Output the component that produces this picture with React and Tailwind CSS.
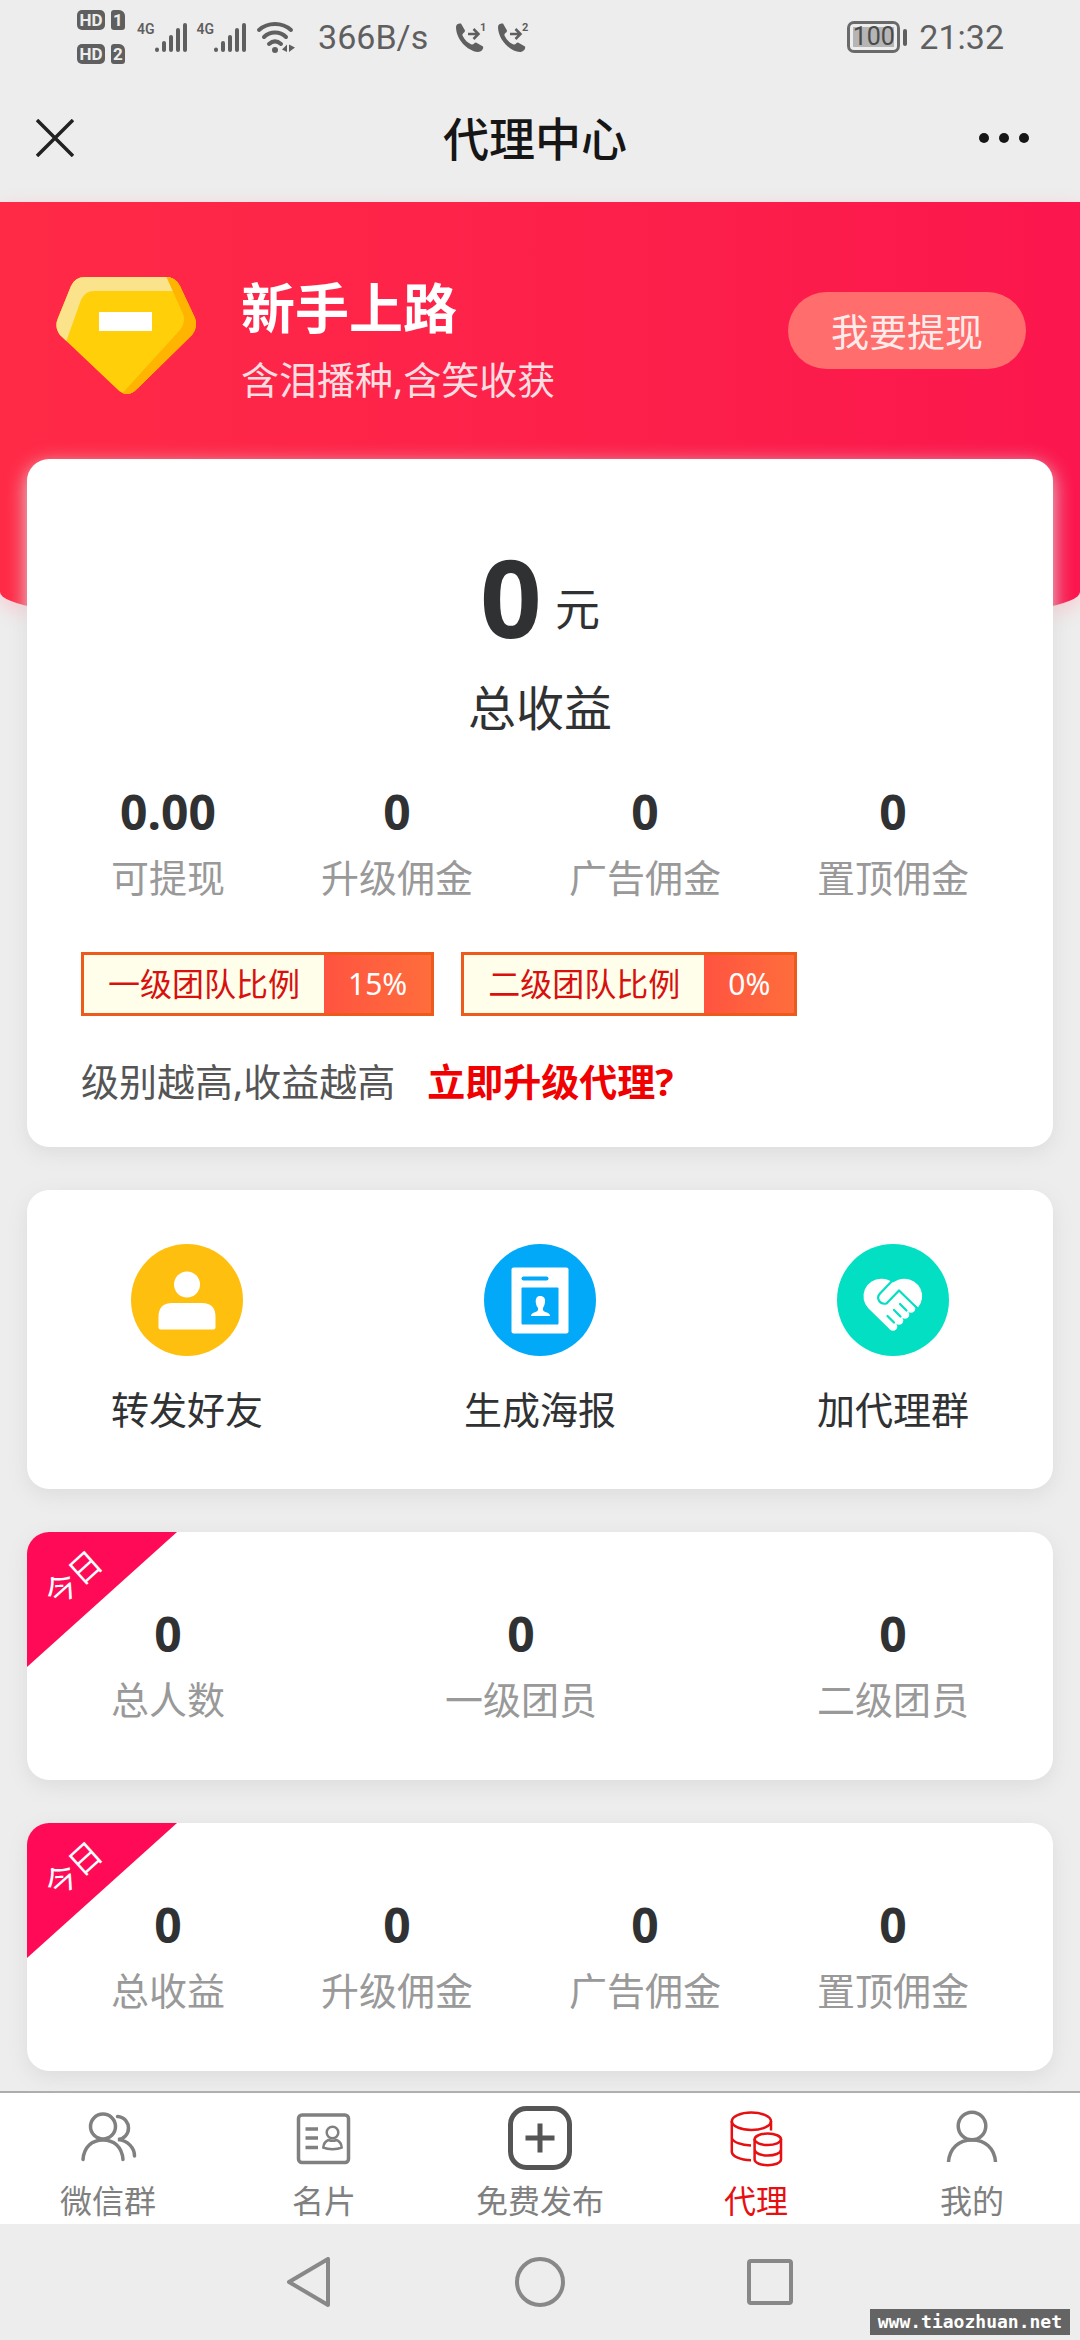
import React from 'react';

const resumo = [
  { label: '可提现', value: '0.00' },
  { label: '升级佣金', value: '0' },
  { label: '广告佣金', value: '0' },
  { label: '置顶佣金', value: '0' }
];

const equipe = [
  { label: '总人数', value: '0' },
  { label: '一级团员', value: '0' },
  { label: '二级团员', value: '0' }
];

const ganhosHoje = [
  { label: '总收益', value: '0' },
  { label: '升级佣金', value: '0' },
  { label: '广告佣金', value: '0' },
  { label: '置顶佣金', value: '0' }
];

// ---------- Status bar ----------

const SimBadge = ({ n }) => (
  <div className="flex items-center gap-[6px]">
    <span className="flex h-5 w-7 items-center justify-center rounded-[5px] bg-[#5f5f5f] text-[17px] leading-5 font-bold text-[#ededed]">HD</span>
    <span className="flex h-5 w-[14px] items-center justify-center rounded-[3px] rounded-tr-[6px] bg-[#5f5f5f] text-[17px] leading-5 font-bold text-[#ededed]">{n}</span>
  </div>
);

const Signal = () => (
  <div className="flex items-start">
    <span className="text-[14px] leading-4 font-semibold">4G</span>
    <svg width="32" height="32" viewBox="0 0 32 32" stroke="#5f5f5f" strokeWidth="4" strokeLinecap="round">
      <path d="M2 28.500V29M9 22V29M16 16V29M23 9V29M30 4V29" />
    </svg>
  </div>
);

const WifiIcon = () => (
  <svg width="40" height="32" viewBox="0 0 40 32" fill="none" stroke="#5f5f5f" strokeWidth="4" strokeLinecap="round">
    <path d="M3 9C12 1 26 1 35 9M8 16C14 10 24 10 30 16M13 23C17 19.500 21 19.500 25 23" />
    <circle cx="19" cy="29" r="3" fill="#5f5f5f" stroke="none" />
    <path d="M31 23.500V31L26 28.500ZM33 31V23.500L39 26.500Z" fill="#5f5f5f" stroke="none" />
  </svg>
);

const CallIcon = ({ n }) => (
  <svg width="34" height="32" viewBox="0 0 34 32">
    <path d="M2 6C2 3 5 2 7 2.500L11 9.500C11 12 8 12 8.500 14.500C10.500 19 14 22 17.500 23.500C20 24 20 21.500 22 21.500L29 25.500C30 28 27 31 24 31C13 30 2 18 2 6Z" fill="#5f5f5f" />
    <path d="M14 13H24M19.500 8L24.500 13L19.500 18" fill="none" stroke="#5f5f5f" strokeWidth="2.500" />
    <text x="26" y="10" fontSize="11" fontWeight="700" fill="#5f5f5f">{n}</text>
  </svg>
);

const StatusBar = () => (
  <div className="flex h-[74px] items-center pr-[76px] pl-[77px] font-[Roboto,sans-serif] text-[34px] leading-10 text-[#5f5f5f]">
    <div className="flex flex-col gap-[14px]">
      <SimBadge n="1" />
      <SimBadge n="2" />
    </div>
    <div className="ml-3 flex gap-[10px]">
      <Signal />
      <Signal />
      <WifiIcon />
    </div>
    <span className="ml-[22px]">366B/s</span>
    <div className="ml-[26px] flex gap-2">
      <CallIcon n="1" />
      <CallIcon n="2" />
    </div>
    <div className="ml-auto flex items-center gap-[3px]">
      <span className="flex h-8 w-[53px] items-center justify-center rounded-[7px] border-3 border-[#6a6a6a] p-[3px]">
        <span className="flex h-5 w-[41px] items-center justify-center bg-[#b5b5b5] text-[25px] leading-5 text-[#4a4a4a]">100</span>
      </span>
      <span className="h-[17px] w-1 rounded-sm bg-[#5f5f5f]" />
    </div>
    <span className="ml-3">21:32</span>
  </div>
);

const TitleBar = () => (
  <header className="flex h-32 items-center justify-between px-9">
    <button type="button" aria-label="关闭" className="w-16">
      <svg width="38" height="38" viewBox="0 0 38 38" stroke="#222" strokeWidth="3.500">
        <path d="M1 1L37 37M37 1L1 37" />
      </svg>
    </button>
    <h1 className="text-[46px] leading-[60px] font-medium text-[#161616]">代理中心</h1>
    <button type="button" aria-label="更多" className="flex w-[74px] justify-end gap-[10px] pr-[15px]">
      <i className="size-[10px] shrink-0 rounded-full bg-[#161616]" />
      <i className="size-[10px] shrink-0 rounded-full bg-[#161616]" />
      <i className="size-[10px] shrink-0 rounded-full bg-[#161616]" />
    </button>
  </header>
);

// ---------- Hero ----------

const Diamond = () => (
  <svg className="shrink-0" width="144" height="138" viewBox="0 0 144 138">
    <defs>
      <clipPath id="gem">
        <path d="M31 5H111Q122 5 126 14L141 46Q144 55 138 63L84 116Q73 128 62 116L6 63Q0 55 4 46L17 14Q21 5 31 5Z" />
      </clipPath>
    </defs>
    <g clipPath="url(#gem)">
      <path d="M0 0H144V138H0Z" fill="#ffcf0a" />
      <path d="M0 0H118L122 19H40Q31 19 27 28L12 70L0 70Z" fill="#fae38a" />
      <path d="M112 4L129 42Q132 50 126 58L64 126H90L144 66V0H112Z" fill="#ffb400" />
    </g>
    <rect x="45" y="40" width="53" height="19" fill="#fff" />
  </svg>
);

const Hero = () => (
  <section className="flex h-[435px] items-start rounded-b-[50%_45px] bg-linear-to-r from-[#ff2a46] to-[#fb164d] px-[54px] pt-[70px] shadow-[0_6px_20px_#f8c8cf]">
    <Diamond />
    <div className="ml-[43px]">
      <h2 className="text-[54px] leading-[72px] font-bold text-white">新手上路</h2>
      <p className="mt-[7px] text-[38px] leading-[56px] text-[#ffdde0]">含泪播种,含笑收获</p>
    </div>
    <button type="button" className="mt-5 ml-auto h-[77px] rounded-full bg-[#ff6d6d] px-[43px] text-[38px] leading-[56px] text-[#ffecea]">我要提现</button>
  </section>
);

// ---------- Cards ----------

const Card = ({ className, children }) => (
  <section className={`relative mx-[27px] rounded-[22px] bg-white shadow-[0_6px_20px_#dcdcdc] ${className}`}>
    {children}
  </section>
);

const Stats = ({ items }) => (
  <dl className="flex justify-between px-[84px]">
    {items.map(item => (
      <div key={item.label} className="flex flex-col-reverse gap-[9px] text-center">
        <dt className="text-[38px] leading-[56px] text-[#999]">{item.label}</dt>
        <dd className="text-[48px] leading-[56px] font-bold text-[#303133]">{item.value}</dd>
      </div>
    ))}
  </dl>
);

const Ratio = ({ label, value }) => (
  <div className="flex h-16 border-3 border-[#ec5b1c] text-[32px] leading-[58px]">
    <span className="bg-[#fffeea] px-6 text-[#d8100e]">{label}</span>
    <span className="bg-linear-to-r from-[#ff5340] to-[#ff6d3c] px-6 text-[30px] text-white">{value}</span>
  </div>
);

const TodayRibbon = () => (
  <div className="absolute top-0 left-0 h-[135px] w-[150px] overflow-hidden rounded-tl-[22px]">
    <div className="h-full bg-[#ff0a56] [clip-path:polygon(0_0,100%_0,0_100%)]">
      <span className="absolute top-6 left-[14px] -rotate-42 text-[32px] leading-[44px] text-white">今日</span>
    </div>
  </div>
);

const ShareIcon = () => (
  <svg width="112" height="112" viewBox="0 0 112 112">
    <circle cx="56" cy="56" r="56" fill="#ffbf0f" />
    <circle cx="56" cy="40.500" r="13" fill="#fff" />
    <path d="M41 59H71Q84.500 59 84.500 73V83.500Q84.500 85.500 82.500 85.500H29.500Q27.500 85.500 27.500 83.500V73Q27.500 59 41 59Z" fill="#fff" />
  </svg>
);

const PosterIcon = () => (
  <svg width="112" height="112" viewBox="0 0 112 112">
    <circle cx="56" cy="56" r="56" fill="#03a9f9" />
    <rect x="27.500" y="23.500" width="57" height="66" rx="2" fill="#fff" />
    <rect x="37.500" y="32.500" width="27" height="4" rx="2" fill="#03a9f9" />
    <rect x="37.500" y="43.500" width="37" height="37" rx="1" fill="#03a9f9" />
    <path d="M56 52C60 52 61.500 54.500 61 58C60.800 61 59.500 63 59 64C58.500 67 60 67.500 63 68.500C65 69.300 66 70.500 66 72H47C47 70.500 48 69.300 50 68.500C53 67.500 54.500 67 54 64C52.500 62 51.800 60 51.700 57.500C51.600 54 53 52 56 52Z" fill="#fff" />
  </svg>
);

const HeartHandsIcon = () => (
  <svg width="112" height="112" viewBox="0 0 112 112">
    <circle cx="56" cy="56" r="56" fill="#02dfc3" />
    <g fill="#fff">
      <path d="M56 38.500C52.500 36 49 34.700 44.500 34.700A17.500 17.500 0 0 0 31.500 64.500L53 85.500L59 79L78 61L81 63.500A17.500 17.500 0 0 0 67.500 34.700C63 34.700 59.500 36 56 38.500Z" />
      <circle cx="56" cy="82.500" r="4.300" />
      <circle cx="62" cy="76.500" r="4.300" />
      <circle cx="68" cy="70.500" r="4.300" />
      <circle cx="74" cy="64.500" r="4.300" />
    </g>
    <path d="M56 36L43 49.500C38.500 54.500 43 61 49.500 59.500L62 46.500L80.500 64.500M63 60L69.500 66.500M57 66L63.500 72.500M50.500 72L57 78.500" fill="none" stroke="#02dfc3" strokeWidth="2.200" strokeLinejoin="round" strokeLinecap="round" />
  </svg>
);

const acoes = [
  { label: '转发好友', Icon: ShareIcon },
  { label: '生成海报', Icon: PosterIcon },
  { label: '加代理群', Icon: HeartHandsIcon }
];

// ---------- Tab bar ----------

const GroupIcon = () => (
  <svg width="64" height="64" viewBox="0 0 64 64" fill="none" stroke="currentColor" strokeWidth="3.500" strokeLinecap="round">
    <circle cx="27" cy="20.500" r="12.500" />
    <path d="M7 53.500C8 41 16 34 27 34S46 41 47 53.500M41.500 10.500C49 11 52.500 17 52.500 22C52.500 28 48 33 42 33.500C52 34.500 58.500 42 58.500 50" />
  </svg>
);

const CardIcon = () => (
  <svg width="64" height="64" viewBox="0 0 64 64" fill="none" stroke="currentColor" strokeWidth="3.500">
    <rect x="6.500" y="9" width="50" height="47.500" rx="3.500" />
    <path d="M13.500 23H26M13.500 32H26M13.500 41.500H26" />
    <g strokeWidth="2.500">
      <circle cx="40.500" cy="26.500" r="5.800" />
      <path d="M36.500 34C33 35.500 31.500 38 31.300 41.500C36 43.700 45 43.700 49.700 41.500C49.500 38 48 35.500 44.500 34C42 35 39 35 36.500 34Z" />
    </g>
  </svg>
);

const PlusIcon = () => (
  <svg width="64" height="64" viewBox="0 0 64 64" fill="none" stroke="#555" strokeWidth="5">
    <rect x="2.500" y="2.500" width="59" height="59" rx="16" />
    <path d="M32 17.500V46.500M17.500 32H46.500" />
  </svg>
);

const CoinsIcon = () => (
  <svg width="64" height="64" viewBox="0 0 64 64" fill="none" stroke="currentColor" strokeWidth="2.500">
    <ellipse cx="27.400" cy="15.300" rx="19.600" ry="8.700" />
    <path d="M7.800 15V46C8.500 50.500 16 54 27 54.300M7.800 32C9 36 17 39.300 27 39.500M47 15V24.500" />
    <ellipse cx="43.800" cy="33.300" rx="13.200" ry="5.700" />
    <path d="M30.600 33V53.500C31 61 56.500 61 57 53.500V33M30.600 43.500C31 51.500 56.500 51.500 57 43.500" />
  </svg>
);

const UserIcon = () => (
  <svg width="64" height="64" viewBox="0 0 64 64" fill="none" stroke="currentColor" strokeWidth="3.500">
    <circle cx="32" cy="20" r="13.800" />
    <path d="M8.500 56C9.500 42 19 34 32 34S54.500 42 55.500 56" />
  </svg>
);

const abas = [
  { label: '微信群', Icon: GroupIcon },
  { label: '名片', Icon: CardIcon },
  { label: '免费发布', Icon: PlusIcon },
  { label: '代理', Icon: CoinsIcon, ativa: true },
  { label: '我的', Icon: UserIcon }
];

const TabBar = () => (
  <nav className="grid grid-cols-5 border-t-2 border-[#adadad] bg-white pt-[13px] pb-[3px]">
    {abas.map(({ label, Icon, ativa }) => (
      <a
        key={label}
        href="#"
        className={`flex flex-col items-center gap-[11px] text-[32px] leading-10 ${ativa ? 'text-[#e60f12]' : 'text-[#808080]'}`}
      >
        <Icon />
        {label}
      </a>
    ))}
  </nav>
);

const SystemNav = () => (
  <div className="relative flex h-[116px] items-center justify-center gap-[180px]">
    <button type="button" aria-label="返回">
      <svg width="50" height="50" viewBox="0 0 50 50" fill="none" stroke="#888" strokeWidth="4" strokeLinejoin="round">
        <path d="M43 2V48L4 25Z" />
      </svg>
    </button>
    <button type="button" aria-label="主页" className="size-[50px] rounded-full border-4 border-[#888]" />
    <button type="button" aria-label="最近任务" className="flex size-[50px] items-center justify-center">
      <i className="size-[46px] rounded-[4px] border-4 border-[#888]" />
    </button>
    <span className="absolute right-[10px] bottom-[5px] bg-[#646464] px-2 font-['DejaVu_Sans_Mono',monospace] text-[18px] leading-[26px] font-bold text-white">www.tiaozhuan.net</span>
  </div>
);

const App = () => {
  return (
    <div className="min-h-screen bg-[#ededed] font-['Noto_Sans','Noto_Sans_CJK_SC',sans-serif]" lang="zh-CN">
      <StatusBar />
      <TitleBar />

      <main className="flex flex-col gap-[43px] pb-5">
        <div>
          <Hero />
          <Card className="-mt-[178px] pt-[84px] pb-[38px]">
            <p className="flex items-center justify-center gap-[13px] text-[#303133]">
              <strong className="text-[108px] leading-[108px] font-bold">0</strong>
              <span className="pt-6 text-[45px] leading-[60px]">元</span>
            </p>
            <h3 className="mt-[27px] mb-[46px] text-center text-[48px] leading-[60px] text-[#303133]">总收益</h3>
            <Stats items={resumo} />
            <div className="mt-[47px] flex gap-[27px] px-[54px]">
              <Ratio label="一级团队比例" value="15%" />
              <Ratio label="二级团队比例" value="0%" />
            </div>
            <p className="mt-[37px] px-[54px] text-[38px] leading-[56px] text-[#555]">
              级别越高,收益越高
              <a href="#" className="ml-8 font-bold text-[#f00000]">立即升级代理?</a>
            </p>
          </Card>
        </div>

        <Card className="flex justify-between px-[84px] pt-[54px] pb-[52px]">
          {acoes.map(({ label, Icon }) => (
            <button key={label} type="button" className="flex flex-col items-center gap-[25px] text-[38px] leading-[56px] text-[#303133]">
              <Icon />
              {label}
            </button>
          ))}
        </Card>

        <Card className="pt-[74px] pb-[53px]">
          <TodayRibbon />
          <Stats items={equipe} />
        </Card>

        <Card className="pt-[74px] pb-[53px]">
          <TodayRibbon />
          <Stats items={ganhosHoje} />
        </Card>
      </main>

      <TabBar />
      <SystemNav />
    </div>
  );
};

export default App;
